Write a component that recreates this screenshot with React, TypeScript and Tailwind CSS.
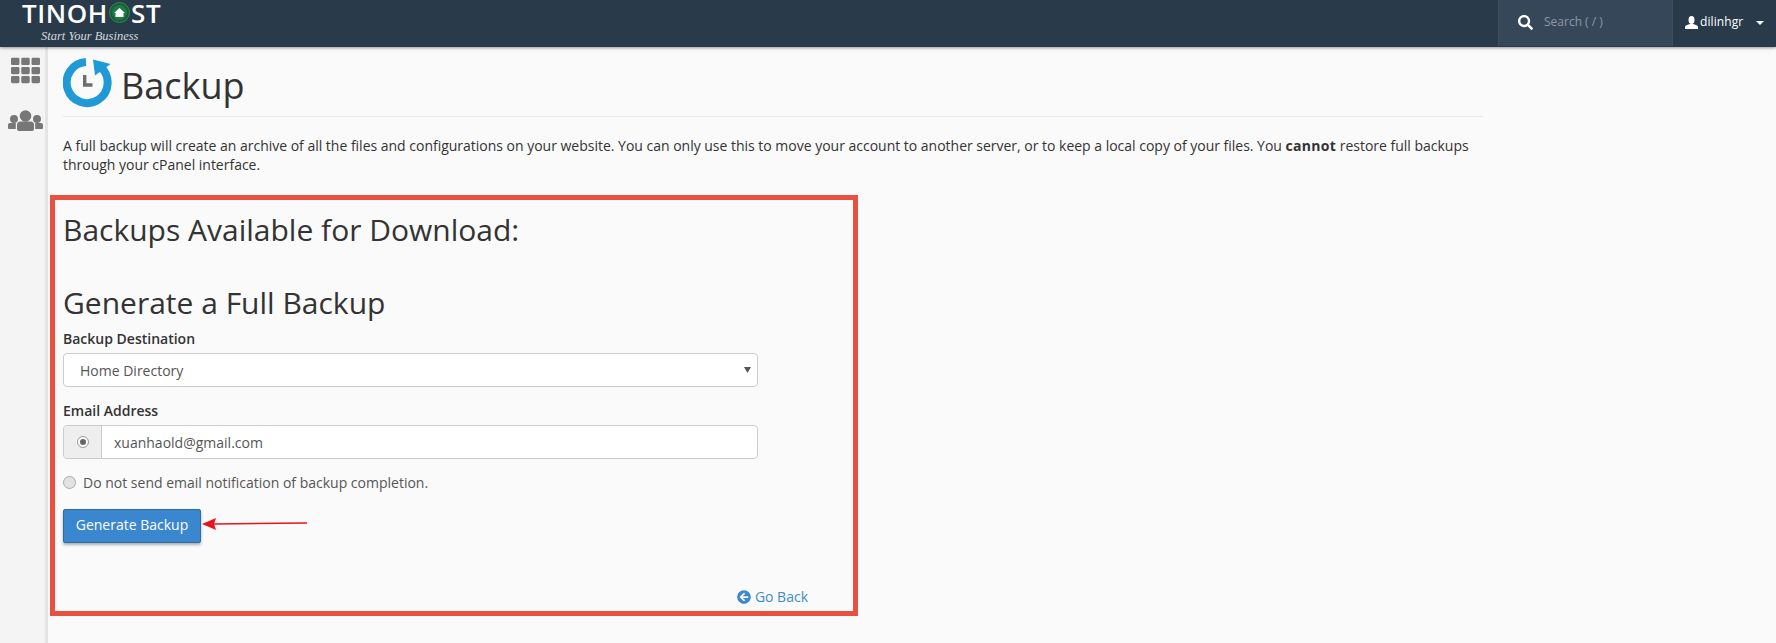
import { FaSearch, FaTh, FaArrowCircleLeft } from "react-icons/fa";

function BackupIcon() {
  return (
    <svg width="50" height="50" viewBox="0 0 50 50" className="shrink-0">
      <path d="M23 4.1 A20.5 20.5 0 1 0 37.5 9" fill="none" stroke="#1f9ad6" strokeWidth="8" />
      <polygon points="30,1.5 47.5,6 32,17.5" fill="#1f9ad6" />
      <path d="M21.7 17 V27 H29.5" fill="none" stroke="#6d6e70" strokeWidth="3.4" />
    </svg>
  );
}

function UsersIcon() {
  return (
    <svg width="35" height="21" viewBox="0 0 35 21" fill="#777" className="ml-[-3px] mt-[25px]">
      <circle cx="17.5" cy="6" r="5.8" />
      <path d="M9 15 Q9 11.5 12.5 11.5 H22.5 Q26 11.5 26 15 V19 Q26 21 24 21 H11 Q9 21 9 19 Z" />
      <circle cx="6" cy="9" r="4" />
      <circle cx="29" cy="9" r="4" />
      <path d="M0 15 Q0 13 2 13 H7.8 V19 H1 Q0 19 0 18 Z" />
      <path d="M35 15 Q35 13 33 13 H27.2 V19 H34 Q35 19 35 18 Z" />
    </svg>
  );
}

function UserIcon() {
  return (
    <svg width="13" height="13" viewBox="0 0 13 13" fill="#fff" className="mr-[2px] shrink-0">
      <ellipse cx="6.5" cy="4" rx="3" ry="4" />
      <path d="M0 13 V11 Q0 9.5 2 9 L4.8 8 H8.2 L11 9 Q13 9.5 13 11 V13 Z" />
    </svg>
  );
}

function Logo() {
  return (
    <div className="w-[170px] pl-[22px] text-white">
      <div className="flex h-[26px] items-center text-[26px] font-semibold leading-[26px] tracking-[0.6px] font-['Open_Sans',sans-serif]">
        <span>TINOH</span>
        <svg width="21" height="21" viewBox="0 0 21 21" className="mx-[1px] mb-[1px] shrink-0">
          <circle cx="10.5" cy="10.5" r="10" fill="#1e5b3a" stroke="#2c8f52" strokeWidth="1" />
          <circle cx="10.5" cy="10.5" r="7.5" fill="#1c7a43" />
          <path d="M5 11 L10.5 6 L16 11 H14.5 V15 H6.5 V11 Z" fill="#fff" />
        </svg>
        <span>ST</span>
      </div>
      <div className="pl-[19px] mt-[3px] text-[12.5px] leading-[14px] italic text-[#d5d9dc] font-['Liberation_Serif',serif]">
        Start Your Business
      </div>
    </div>
  );
}

export default function App() {
  return (
    <div className="h-[643px] w-[1776px] overflow-hidden bg-[#fafafa] font-['Open_Sans',sans-serif] text-[14px] text-[#333]">
      <header className="relative flex h-[47px] items-start justify-between bg-[#293a4a] shadow-[0_1px_3px_rgba(0,0,0,0.4)]">
        <Logo />
        <div className="flex h-[46px]">
          <div className="flex w-[175px] items-center border-x border-[#3e4e5e] bg-[#36475a] pb-[2px] pl-[19px] text-[12px] text-[#8c98a3]">
            <FaSearch className="mr-[11px] text-[15px] text-white" />
            <span>Search ( / )</span>
          </div>
          <div className="flex w-[103px] items-center pb-[2px] pl-[12px] text-[12px] tracking-[0.1px] text-white">
            <UserIcon />
            <span>dilinhgr</span>
            <svg width="8" height="4" viewBox="0 0 8 4" fill="#fff" className="ml-[13px] mt-[2px]">
              <polygon points="0,0 8,0 4,4" />
            </svg>
          </div>
        </div>
      </header>
      <div className="flex h-[596px]">
        <aside className="flex w-[48px] shrink-0 flex-col items-start border-r-[3px] border-[#e4e4e4] bg-[#f4f4f4] pl-[11px] pt-[9px] text-[#777]">
          <FaTh className="text-[29px]" />
          <UsersIcon />
        </aside>
        <main className="min-w-0 flex-1">
          <div className="ml-[15px] w-[1420px] pt-[11px]">
            <div className="flex h-[59px] items-start border-b border-[#eaeaea]">
              <BackupIcon />
              <h1 className="ml-[8px] mt-[4px] text-[36px] leading-[48px] text-[#333]">Backup</h1>
            </div>
            <p className="mt-[19px] text-[14px] leading-[19px] tracking-[-0.012px]">
              A full backup will create an archive of all the files and configurations on your website. You can only use this to move your account to another server, or to keep a local copy of your files. You <b className="tracking-[0.3px]">cannot</b> restore full backups through your cPanel interface.
            </p>
          </div>
          <section className="ml-[2px] mt-[21px] h-[421px] w-[808px] border-[5px] border-[#e8503f] pl-[8px]">
            <h2 className="mt-[10px] text-[30px] leading-[40px]">Backups Available for Download:</h2>
            <h2 className="mt-[34px] text-[30px] leading-[38px]">Generate a Full Backup</h2>
            <label className="mt-[7px] block text-[14px] font-semibold leading-[20px]">Backup Destination</label>
            <div className="mt-[4px] flex h-[34px] w-[695px] items-center justify-between rounded-[4px] border border-[#ccc] bg-white pl-[16px] pr-[6px] text-[#555]">
              <span>Home Directory</span>
              <svg width="7" height="6" viewBox="0 0 7 6" fill="#555">
                <polygon points="0,0 7,0 3.5,6" />
              </svg>
            </div>
            <label className="mt-[14px] block text-[14px] font-semibold leading-[20px]">Email Address</label>
            <div className="mt-[4px] flex h-[34px] w-[695px] rounded-[4px] border border-[#ccc] bg-white text-[#555]">
              <div className="flex w-[38px] items-center justify-center rounded-l-[4px] border-r border-[#ccc] bg-[#eee]">
                <span className="flex h-[12px] w-[12px] items-center justify-center rounded-full border border-[#999] bg-white">
                  <span className="h-[6px] w-[6px] rounded-full bg-[#666]" />
                </span>
              </div>
              <div className="flex items-center pl-[12px]">xuanhaold@gmail.com</div>
            </div>
            <div className="mt-[13px] flex h-[20px] items-center">
              <span className="h-[13px] w-[13px] rounded-full border border-[#aaa] bg-[#e2e2e2]" />
              <span className="ml-[7px] text-[#555]">Do not send email notification of backup completion.</span>
            </div>
            <div className="mt-[17px] flex items-center">
              <button className="flex h-[34px] w-[138px] items-center justify-center rounded-[2px] border border-[#2e6da4] bg-[#3a87cf] pb-[4px] text-[14px] text-white shadow-[0_2px_3px_rgba(0,0,0,0.3)]">
                Generate Backup
              </button>
              <svg width="106" height="14" viewBox="0 0 106 14" className="ml-[1px] mb-[4px]">
                <path d="M12 7 L105 6" stroke="#e8131b" strokeWidth="1.6" />
                <polygon points="0,7 14,1 12,7 14,13" fill="#e8131b" />
              </svg>
            </div>
            <div className="mt-[43px] flex w-[745px] items-center justify-end text-[#428bca]">
              <FaArrowCircleLeft className="mr-[4px] text-[14px] text-[#3a87cf]" />
              <span>Go Back</span>
            </div>
          </section>
        </main>
      </div>
    </div>
  );
}
